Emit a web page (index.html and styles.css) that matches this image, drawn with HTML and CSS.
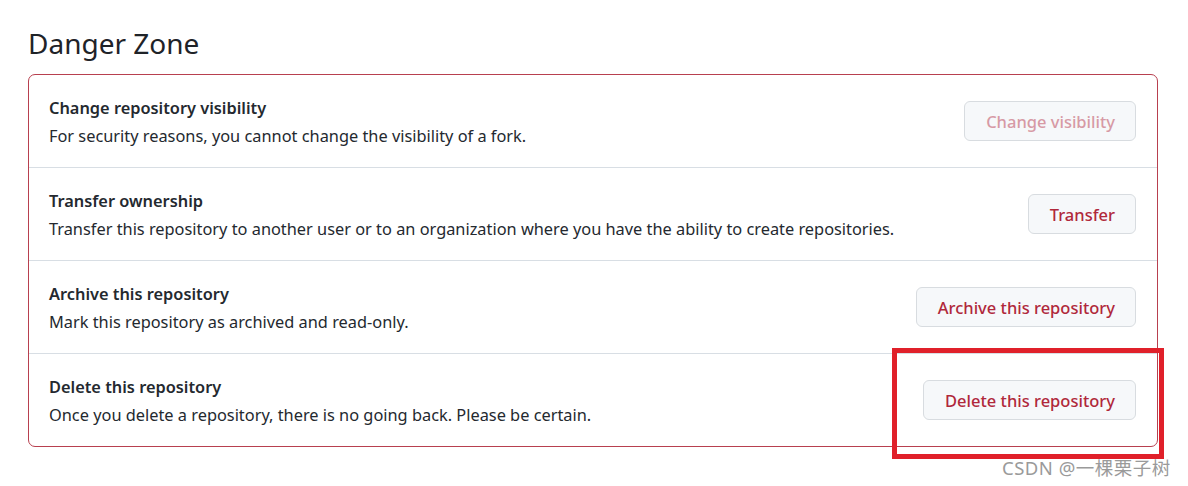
FILE: index.html
```html
<!DOCTYPE html>
<html>
<head>
<meta charset="utf-8">
<link rel="stylesheet" href="styles.css">
</head>
<body>
<div class="page">
  <h2 class="heading">Danger Zone</h2>
  <div class="zone">
    <div class="row">
      <div class="info">
        <div class="title">Change repository visibility</div>
        <div class="desc">For security reasons, you cannot change the visibility of a fork.</div>
      </div>
      <button class="btn disabled">Change visibility</button>
    </div>
    <div class="row">
      <div class="info">
        <div class="title">Transfer ownership</div>
        <div class="desc">Transfer this repository to another user or to an organization where you have the ability to create repositories.</div>
      </div>
      <button class="btn">Transfer</button>
    </div>
    <div class="row">
      <div class="info">
        <div class="title">Archive this repository</div>
        <div class="desc">Mark this repository as archived and read-only.</div>
      </div>
      <button class="btn">Archive this repository</button>
    </div>
    <div class="row last">
      <div class="info">
        <div class="title">Delete this repository</div>
        <div class="desc">Once you delete a repository, there is no going back. Please be certain.</div>
      </div>
      <div class="highlight-wrap">
        <button class="btn">Delete this repository</button>
        <div class="highlight"></div>
      </div>
    </div>
  </div>
  <div class="watermark">CSDN @一棵栗子树</div>
</div>
</body>
</html>
```
FILE: styles.css
```css
html, body {
  margin: 0;
  padding: 0;
  background: #ffffff;
}
body {
  font-family: "Noto Sans", "Open Sans", "Noto Sans CJK SC", sans-serif;
  color: #1f2328;
}
.page {
  padding: 24px 30px 0 28px;
  position: relative;
  height: 486px;
  box-sizing: border-box;
}
.heading {
  margin: 0 0 12px 0;
  font-size: 28px;
  font-weight: 400;
  line-height: 38px;
  color: #1f2328;
}
.zone {
  border: 1px solid #b8404f;
  border-radius: 7px;
  width: 1130px;
  box-sizing: border-box;
}
.row {
  display: flex;
  align-items: center;
  justify-content: space-between;
  height: 92px;
  padding: 0 21px 0 20px;
  border-bottom: 1px solid #d8dee4;
}
.row.last {
  border-bottom: none;
  height: 92px;
}
.info {
  padding-top: 2px;
}
.title {
  font-size: 16.35px;
  font-weight: 600;
  line-height: 27px;
  color: #24292f;
}
.desc {
  font-size: 16.35px;
  line-height: 28px;
  color: #24292f;
}
.btn {
  font-family: inherit;
  font-size: 16.5px;
  font-weight: 500;
  color: #b0283b;
  background: #f6f8fa;
  border: 1px solid #d8dce0;
  border-radius: 6px;
  height: 40px;
  padding: 0 20px 0 21px;
  cursor: pointer;
}
.btn.disabled {
  color: #d79aa5;
  background: #f6f8fa;
}
.highlight-wrap {
  position: relative;
}
.highlight {
  position: absolute;
  left: -31px;
  top: -32px;
  width: 272px;
  height: 111px;
  box-sizing: border-box;
  border: 5px solid #e0202a;
  pointer-events: none;
}
.watermark {
  position: absolute;
  left: 1002px;
  top: 454px;
  font-size: 18.5px;
  color: #9a9a9a;
  font-family: "Noto Sans", "Noto Sans CJK SC", sans-serif;
  letter-spacing: 0.5px;
}
```
